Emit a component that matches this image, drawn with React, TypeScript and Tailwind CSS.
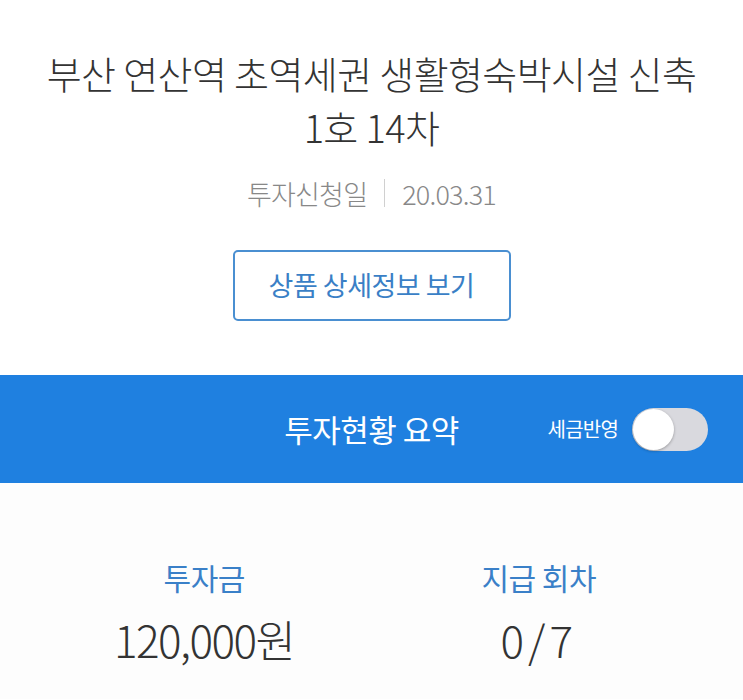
import React from "react";

export default function App() {
  const font = { fontFamily: '"Noto Sans CJK KR", "Noto Sans", sans-serif' };
  return (
    <div className="w-[743px] h-[700px] bg-white overflow-hidden" style={font}>
      <div className="pt-[46px] flex flex-col items-center">
        <h1 className="text-[38px] leading-[54px] font-light text-[#333] text-center tracking-[-0.6px] w-full">
          부산 연산역 초역세권 생활형숙박시설 신축
          <br />
          1호 14차
        </h1>
        <div className="mt-[25px] flex items-center text-[27px] font-light text-[#888] leading-none tracking-[-0.8px]">
          <span>투자신청일</span>
          <span className="mx-[17px] w-px h-[28px] bg-[#d0d0d0]" />
          <span>20.03.31</span>
        </div>
        <button className="mt-[43px] w-[278px] h-[71px] border-2 border-[#4a8fd1] rounded-[5px] text-[27px] text-[#3a7fc6] flex items-center justify-center tracking-[-0.5px]">
          상품 상세정보 보기
        </button>
      </div>
      <div className="mt-[54px] h-[108px] bg-[#1f80e0] relative flex items-center justify-center">
        <span className="text-white text-[31px] tracking-[-0.5px]">투자현황 요약</span>
        <div className="absolute right-[35px] top-0 h-full flex items-center gap-[14px]">
          <span className="text-white text-[20px] tracking-[-0.8px]">세금반영</span>
          <div className="w-[76px] h-[43px] rounded-full bg-[#d9d9de] relative">
            <div className="absolute left-[1px] top-[1px] w-[41px] h-[41px] rounded-full bg-white shadow-[0_1px_3px_rgba(0,0,0,0.3)]" />
          </div>
        </div>
      </div>
      <div className="px-[37px] pt-[79px] grid grid-cols-2 bg-[#fdfdfd] h-[216px]">
        <div className="flex flex-col items-center">
          <span className="text-[30px] text-[#3a80c8] leading-none tracking-[-0.5px]">투자금</span>
          <span className="mt-[25px] text-[44px] font-light text-[#333] leading-none tracking-[-1.5px]">120,000원</span>
        </div>
        <div className="flex flex-col items-center">
          <span className="text-[30px] text-[#3a80c8] leading-none tracking-[-0.5px]">지급 회차</span>
          <span className="mt-[25px] text-[44px] font-light text-[#333] leading-none tracking-[4px]">0/7</span>
        </div>
      </div>
    </div>
  );
}
